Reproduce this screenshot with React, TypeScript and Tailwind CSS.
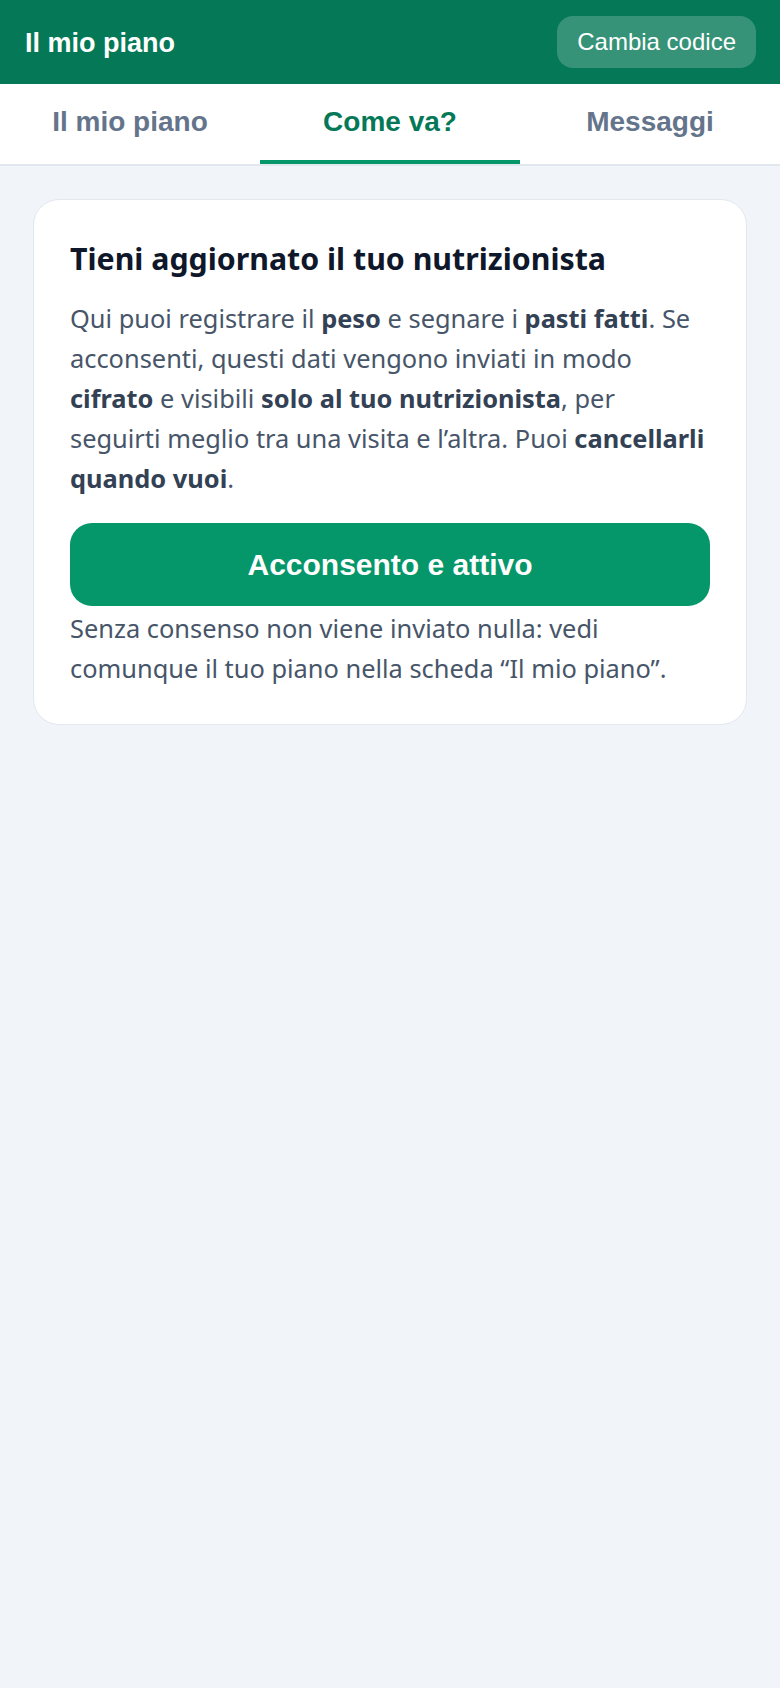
const tabs = ['Il mio piano', 'Come va?', 'Messaggi'];

export default function App() {
  const active = 1;
  return (
    <div className="min-h-[1688px] bg-[#f1f5f9] font-['Noto_Sans',sans-serif]">
      <header className="flex h-[84px] items-center justify-between bg-[#047857] pl-[25px] pr-6">
        <h1 className="pt-[3px] font-['Liberation_Sans',Arial,sans-serif] text-[27px] font-bold text-white">Il mio piano</h1>
        <button className="h-[52px] rounded-[16px] bg-white/20 px-5 font-['Liberation_Sans',Arial,sans-serif] text-[24px] text-white">
          Cambia codice
        </button>
      </header>

      <nav className="grid grid-cols-3 border-b-2 border-[#e2e8f0] bg-white">
        {tabs.map((t, i) => (
          <div
            key={t}
            className={`flex h-[80px] items-center justify-center border-b-4 font-['Liberation_Sans',Arial,sans-serif] text-[28px] font-bold ${
              i === active ? 'border-[#059669] text-[#047857]' : 'border-transparent text-[#64748b]'
            }`}
          >
            {t}
          </div>
        ))}
      </nav>

      <main className="px-[33px] pt-[33px]">
        <section className="rounded-[26px] border border-[#e2e8f0] bg-white p-9">
          <h2 className="text-[30.3px] font-bold leading-[46px] text-[#0f172a]">Tieni aggiornato il tuo nutrizionista</h2>
          <p className="mt-4 whitespace-nowrap text-[25.4px] leading-[40px] text-[#475569]">
            Qui puoi registrare il <strong className="text-[#334155]">peso</strong> e segnare i{' '}
            <strong className="text-[#334155]">pasti fatti</strong>. Se
            <br />
            acconsenti, questi dati vengono inviati in modo
            <br />
            <strong className="text-[#334155]">cifrato</strong> e visibili{' '}
            <strong className="text-[#334155]">solo al tuo nutrizionista</strong>, per
            <br />
            seguirti meglio tra una visita e l’altra. Puoi <strong className="text-[#334155]">cancellarli</strong>
            <br />
            <strong className="text-[#334155]">quando vuoi</strong>.
          </p>
          <button className="mt-[25px] h-[83px] w-full rounded-[22px] bg-[#059669] font-['Liberation_Sans',Arial,sans-serif] text-[30px] font-bold text-white">
            Acconsento e attivo
          </button>
          <p className="mt-[2px] whitespace-nowrap text-[25.4px] leading-[40px] text-[#475569]">
            Senza consenso non viene inviato nulla: vedi
            <br />
            comunque il tuo piano nella scheda “Il mio piano”.
          </p>
        </section>
      </main>
    </div>
  );
}
